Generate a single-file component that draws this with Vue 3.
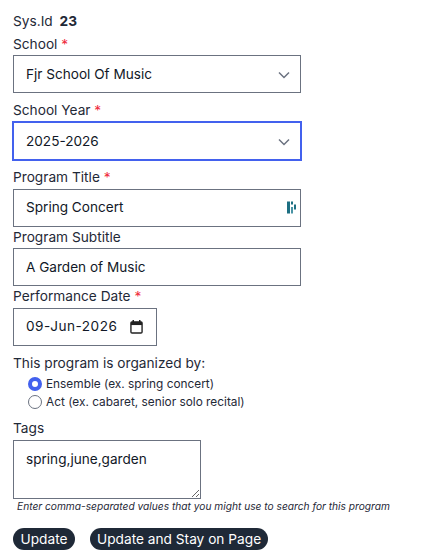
<script setup>
import { ref } from 'vue';

const school = ref('Fjr School Of Music');
const schoolYear = ref('2025-2026');
const title = ref('Spring Concert');
const subtitle = ref('A Garden of Music');
const performanceDate = ref('09-Jun-2026');
const organizedBy = ref('ensemble');
const tags = ref('spring,june,garden');
</script>

<template>
	<form class="page" @submit.prevent>
		<div class="sys_id">Sys.Id <b>23</b></div>

		<label class="field_label school_label">School <span class="req">*</span></label>
		<div class="select_wrap">
			<select class="control select" v-model="school">
				<option>Fjr School Of Music</option>
			</select>
			<svg class="chevron" width="12" height="8" viewBox="0 0 12 8"><path d="M1 1.5l5 5 5-5" fill="none" stroke="#6b7280" stroke-width="1.5" /></svg>
		</div>

		<label class="field_label year_label">School Year <span class="req">*</span></label>
		<div class="select_wrap">
			<select class="control select focused" v-model="schoolYear">
				<option>2025-2026</option>
			</select>
			<svg class="chevron" width="12" height="8" viewBox="0 0 12 8"><path d="M1 1.5l5 5 5-5" fill="none" stroke="#6b7280" stroke-width="1.5" /></svg>
		</div>

		<label class="field_label title_label">Program Title <span class="req">*</span></label>
		<div class="select_wrap">
			<input class="control text_input" type="text" v-model="title" />
			<svg class="ext_icon" width="10" height="13" viewBox="0 0 10 13">
				<rect x="0" y="0.5" width="3" height="12" fill="#1d6f82" />
				<rect x="4" y="0.5" width="2" height="3" fill="#1d6f82" />
				<rect x="4" y="6" width="2" height="6.5" fill="#4a94a5" />
				<rect x="7" y="3.5" width="2" height="5" fill="#1d6f82" />
			</svg>
		</div>

		<label class="field_label sub_label">Program Subtitle</label>
		<input class="control" type="text" v-model="subtitle" />

		<label class="field_label date_label">Performance Date <span class="req">*</span></label>
		<div class="select_wrap date_wrap">
			<input class="control text_input" type="text" v-model="performanceDate" />
			<svg class="calendar" width="13" height="14" viewBox="0 0 14 15">
				<path d="M3.5 0v2M10.5 0v2" stroke="#222" stroke-width="1.6" />
				<rect x="1" y="2" width="12" height="12" rx="1.2" fill="none" stroke="#222" stroke-width="1.5" />
				<rect x="1" y="2" width="12" height="3.4" fill="#222" />
			</svg>
		</div>

		<div class="organized">This program is organized by:</div>
		<div class="radios">
			<label class="radio_row">
				<input type="radio" value="ensemble" v-model="organizedBy" />
				<span>Ensemble (ex. spring concert)</span>
			</label>
			<label class="radio_row">
				<input type="radio" value="act" v-model="organizedBy" />
				<span>Act (ex. cabaret, senior solo recital)</span>
			</label>
		</div>

		<label class="field_label tags_label">Tags</label>
		<textarea class="control tags" v-model="tags"></textarea>
		<div class="hint">Enter comma-separated values that you might use to search for this program</div>

		<div class="buttons">
			<button class="pill update">Update</button>
			<button class="pill">Update and Stay on Page</button>
		</div>
	</form>
</template>

<style scoped>
.page {
	display: flex;
	flex-flow: column nowrap;
	align-items: flex-start;
	width: 423px;
	height: 555px;
	box-sizing: border-box;
	overflow: hidden;
	padding: 12px 0 0 13px;
	font-family: "Inter", "Noto Sans", sans-serif;
	font-size: 13.7px;
	color: #1f2937;
}
.sys_id {
	line-height: 18px;
}
.sys_id b {
	margin-left: 3px;
	font-weight: 700;
}
.field_label {
	display: block;
	line-height: 18px;
}
.school_label { margin-top: 5px; margin-bottom: 2px; }
.year_label { margin-top: 8px; margin-bottom: 3px; }
.title_label { margin-top: 8px; margin-bottom: 3px; }
.sub_label { margin-top: 1px; margin-bottom: 2px; }
.date_label { margin-top: 1px; margin-bottom: 3px; }
.tags_label { margin-top: 8px; margin-bottom: 3px; }
.req {
	color: #ef2b3c;
}
.select_wrap {
	position: relative;
}
.control {
	display: block;
	width: 288px;
	height: 38px;
	box-sizing: border-box;
	margin: 0;
	padding: 0 12px 1px;
	border: 1px solid #6b7280;
	border-radius: 0;
	background: #fff;
	font: inherit;
	font-size: 13.6px;
	color: #111827;
	outline: none;
	appearance: none;
}
.text_input {
	padding-bottom: 3px;
}
.focused {
	border-color: #4361ee;
	box-shadow: 0 0 0 1px #4361ee;
}
.chevron {
	position: absolute;
	right: 11px;
	top: 16px;
	pointer-events: none;
}
.ext_icon {
	position: absolute;
	right: 4px;
	top: 12px;
}
.date_wrap .control {
	width: 144px;
	letter-spacing: 0.5px;
}
.calendar {
	position: absolute;
	right: 14px;
	top: 12px;
}
.organized {
	margin-top: 8px;
	line-height: 18px;
}
.radios {
	display: flex;
	flex-flow: column nowrap;
	padding-left: 15px;
	margin-top: 3px;
}
.radio_row {
	display: flex;
	align-items: center;
	gap: 4px;
	height: 18px;
	font-size: 11.85px;
}
.radio_row input {
	width: 14px;
	height: 14px;
	margin: 0;
	box-sizing: border-box;
	appearance: none;
	border: 1px solid #6b7280;
	border-radius: 50%;
	background: #fff;
}
.radio_row input:checked {
	border: 4px solid #4361ee;
}
.tags {
	width: 188px;
	height: 59px;
	padding: 8px 12px;
	resize: vertical;
	line-height: 20px;
}
.hint {
	margin: 0 0 0 4px;
	font-size: 10.2px;
	line-height: 14px;
	font-style: italic;
}
.buttons {
	display: flex;
	gap: 15px;
	margin-top: 15px;
}
.pill {
	height: 22px;
	padding: 0 7px;
	border: none;
	border-radius: 11px;
	background: #1f2937;
	color: #fff;
	font: inherit;
	font-size: 13.7px;
	line-height: 22px;
}
.update {
	width: 62px;
	padding: 0;
}
</style>
